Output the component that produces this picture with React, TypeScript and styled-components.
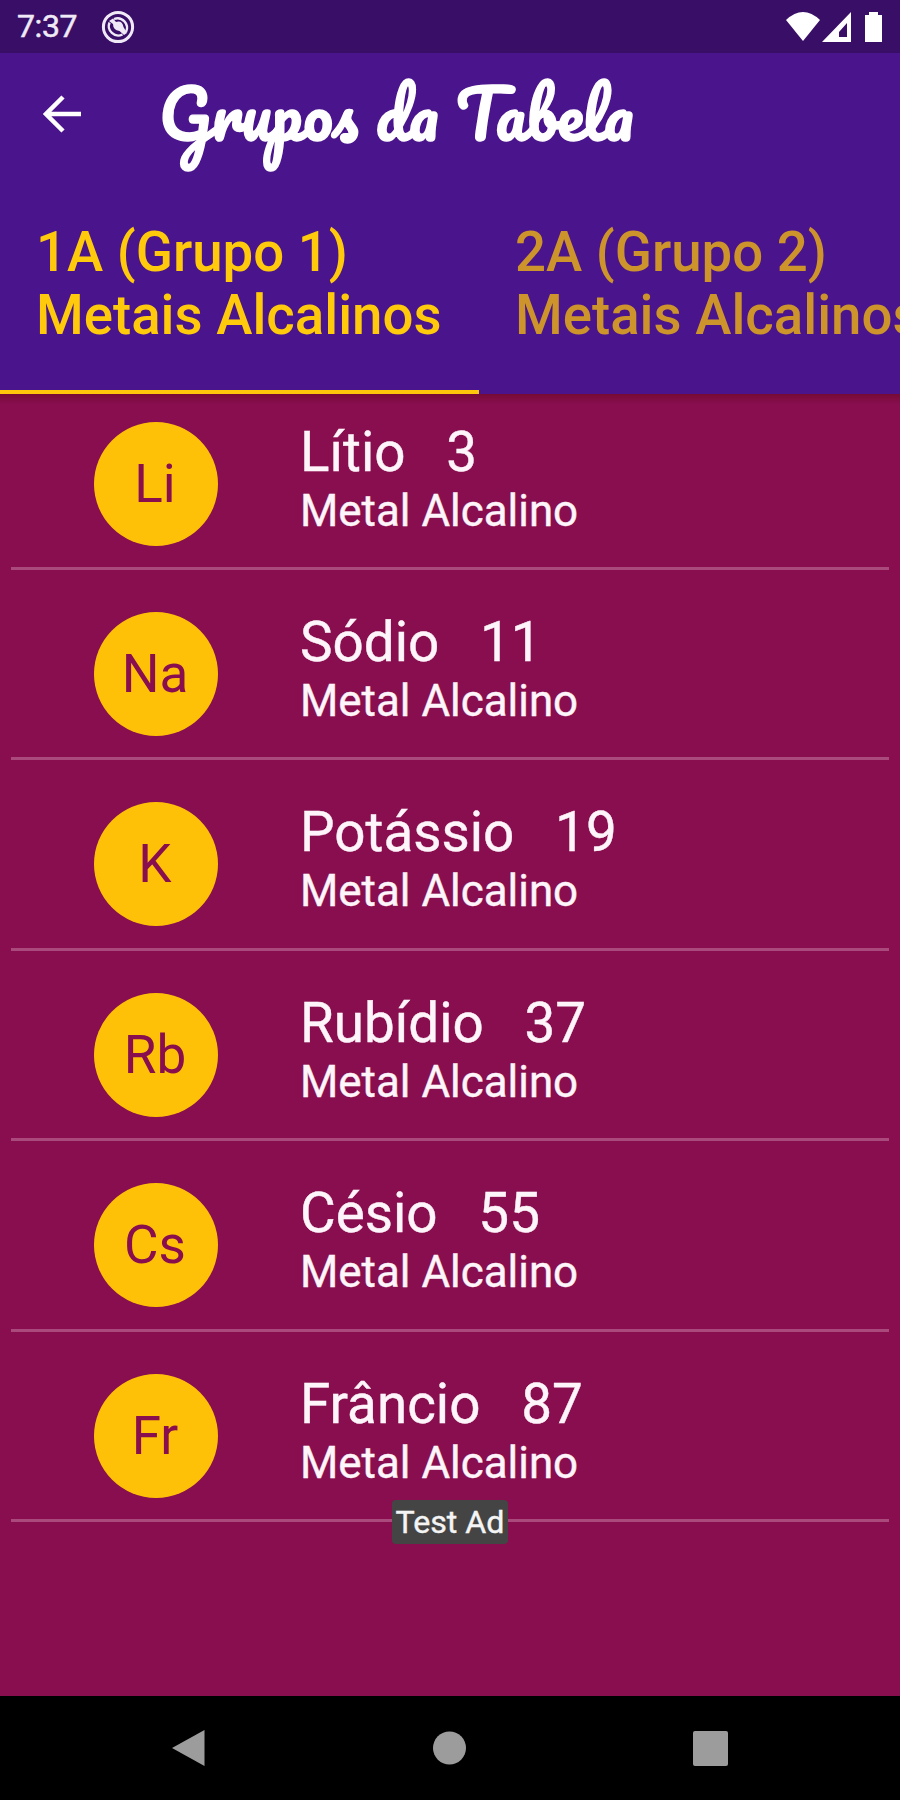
import React from "react";
import styled, { createGlobalStyle } from "styled-components";

const GlobalStyle = createGlobalStyle`
  * { box-sizing: border-box; }
  body { margin: 0; font-family: Roboto, "Liberation Sans", sans-serif; }
`;

const Screen = styled.div`
  display: flex;
  flex-direction: column;
  width: 900px;
  height: 1800px;
  overflow: hidden;
  background: #880e4f;
`;

const StatusBar = styled.div`
  display: flex;
  align-items: center;
  flex: none;
  height: 53px;
  padding: 0 16px 0 17px;
  background: #380e67;
  color: #f0eaf6;
`;

const Clock = styled.span`
  width: 84px;
  font-size: 32px;
  letter-spacing: -0.4px;
  line-height: 55px;
  white-space: nowrap;
  -webkit-text-stroke: 0.5px currentColor;
`;

const StatusIcons = styled.div`
  display: flex;
  margin-left: auto;
`;

const Header = styled.header`
  display: flex;
  flex-direction: column;
  flex: none;
  height: 341px;
  background: #4a148c;
`;

const Toolbar = styled.div`
  display: flex;
  align-items: center;
  height: 122px;
  padding-left: 43px;
`;

const Title = styled.h1`
  margin: 0 0 0 77px;
  font-family: Pacifico, "Liberation Serif", cursive;
  font-size: 65.5px;
  font-weight: 400;
  line-height: 122px;
  color: #fff;
  white-space: nowrap;
  -webkit-text-stroke: 1.4px #fff;
`;

const Tabs = styled.nav`
  display: flex;
  flex: 1;
`;

const Tab = styled.div<{ $active?: boolean }>`
  flex: none;
  width: 479px;
  padding: 46px 0 0 36px;
  border-bottom: 4px solid ${(p) => (p.$active ? "#ffc60c" : "transparent")};
  color: ${(p) => (p.$active ? "#ffca0c" : "#cd942c")};
  font-size: 54.6px;
  font-weight: 500;
  line-height: 63px;
  white-space: nowrap;
`;

const List = styled.main`
  flex: 1;
  padding: 0 11px;
  background: linear-gradient(#760b35, #880e4f 10px);
`;

const Row = styled.section`
  display: flex;
  height: 190.4px;
  padding: 42px 0 0 83px;
  border-bottom: 3px solid #aa4a7c;

  &:first-child {
    height: 176px;
    padding-top: 27.5px;
  }
`;

const Avatar = styled.div`
  display: flex;
  align-items: center;
  justify-content: center;
  flex: none;
  width: 124px;
  height: 124px;
  padding-right: 2px;
  border-radius: 50%;
  background: #ffc107;
  color: #880e4f;
  font-size: 53px;
`;

const Info = styled.div`
  padding-left: 82px;
  color: #fdf5f9;
  white-space: pre;
  -webkit-text-stroke: 0.4px currentColor;
`;

const Name = styled.div`
  font-size: 54.8px;
  line-height: 60px;
`;

const Kind = styled.div`
  font-size: 43.9px;
  line-height: 58px;
`;

const AdSlot = styled.div`
  position: relative;
  display: flex;
  justify-content: center;
  margin-top: -22px;
`;

const AdLabel = styled.span`
  width: 116px;
  height: 44px;
  border-radius: 4px;
  background: #444;
  color: #f4f4f4;
  font-size: 32.2px;
  line-height: 45px;
  text-align: center;
  white-space: nowrap;
  -webkit-text-stroke: 0.4px currentColor;
`;

const NavBar = styled.footer`
  display: flex;
  align-items: center;
  justify-content: space-between;
  flex: none;
  height: 104px;
  padding: 0 172px;
  background: #000;
`;

const elements = [
  ["Li", "Lítio", 3],
  ["Na", "Sódio", 11],
  ["K", "Potássio", 19],
  ["Rb", "Rubídio", 37],
  ["Cs", "Césio", 55],
  ["Fr", "Frâncio", 87],
] as const;

export default function App() {
  return (
    <Screen>
      <GlobalStyle />
      <StatusBar>
        <Clock>7:37</Clock>
        <svg width="34" height="34" viewBox="0 0 34 34" fill="none" stroke="currentColor">
          <circle cx="17" cy="17" r="14.6" strokeWidth="3" />
          <path d="M8.500 12.500a9.500 9.500 0 0 0 13 12M13 9a9.500 9.500 0 0 1 12 13" strokeWidth="2.4" />
          <path d="M8 11L12 8.500L15 12Q21 10 22.500 17L26 23L23 25L18.500 21Q12 20 12 14z" fill="currentColor" stroke="none" />
        </svg>
        <StatusIcons>
          <svg width="100" height="34" viewBox="0 0 100 34" fill="#fff">
            <path d="M2 10Q19-6 36 10L19 31z" />
            <path fillRule="evenodd" d="M67 2v30H38zM63 13v14H55V22z" />
            <path d="M81 5h4V2h9v3h4v27H81z" />
          </svg>
        </StatusIcons>
      </StatusBar>
      <Header>
        <Toolbar>
          <svg width="39" height="38" viewBox="0 0 39 38" fill="none" stroke="#fff" strokeWidth="4.500">
            <path d="M38 19H4M20 2L3 19l17 17" />
          </svg>
          <Title>Grupos da Tabela</Title>
        </Toolbar>
        <Tabs>
          <Tab $active>1A (Grupo 1)<br />Metais Alcalinos</Tab>
          <Tab>2A (Grupo 2)<br />Metais Alcalinos</Tab>
        </Tabs>
      </Header>
      <List>
        {elements.map(([symbol, name, number]) => (
          <Row key={symbol}>
            <Avatar>{symbol}</Avatar>
            <Info>
              <Name>{`${name}   ${number}`}</Name>
              <Kind>Metal Alcalino</Kind>
            </Info>
          </Row>
        ))}
        <AdSlot>
          <AdLabel>Test Ad</AdLabel>
        </AdSlot>
      </List>
      <NavBar>
        <svg width="33" height="36" viewBox="0 0 33 36" fill="#9c9c9c"><path d="M32.500 0V36L0 18z" /></svg>
        <svg width="34" height="34" viewBox="0 0 34 34" fill="#9c9c9c"><circle cx="17.500" cy="17" r="16.500" /></svg>
        <svg width="35" height="35" viewBox="0 0 35 35" fill="#9c9c9c"><rect width="35" height="35" rx="2" /></svg>
      </NavBar>
    </Screen>
  );
}
